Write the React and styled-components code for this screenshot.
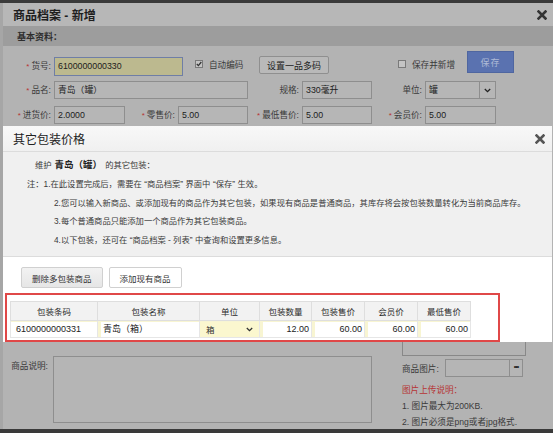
import React from "react";
import styled, { createGlobalStyle } from "styled-components";

const GlobalStyle = createGlobalStyle`
  html, body { margin: 0; padding: 0; }
  body {
    background: #3a3a3a;
    font-family: "Liberation Sans", "Noto Sans CJK SC", sans-serif;
  }
  * { box-sizing: border-box; }
`;

const Page = styled.div`
  position: relative;
  width: 553px;
  height: 433px;
  overflow: hidden;
  display: flex;
  padding-top: 3px;
  background: #3a3a3a;
`;

const LeftStrip = styled.div`
  flex: none;
  width: 3px;
  height: 426px;
  background: #a6a6a6;
`;

const Dialog = styled.div`
  flex: none;
  width: 550px;
  height: 426px;
  background: #b3b3b3;
  display: flex;
  flex-direction: column;
`;

const TitleBar = styled.div`
  height: 23px;
  flex: none;
  background: #b7b7b7;
  display: flex;
  align-items: center;
  justify-content: space-between;
  padding: 0 6px 0 10px;
  font-size: 12px;
  font-weight: bold;
  color: #1e1e1e;
`;

const SectionHeader = styled.div`
  height: 20px;
  flex: none;
  background: #9d9d9d;
  display: flex;
  align-items: center;
  padding-left: 14px;
  font-size: 9px;
  font-weight: bold;
  color: #2e2e2e;
`;

const Form = styled.div`
  padding-top: 5px;
`;

const Row1 = styled.div`
  display: flex;
  align-items: flex-end;
  height: 25px;
`;

const Grid = styled.div`
  display: grid;
  grid-template-columns: 48px 71px 47px 70px 48px 70px 47px 71px;
  column-gap: 3px;
  height: 18px;
  margin-top: ${(p) => p.$top}px;
`;

const Label = styled.div`
  width: ${(p) => (p.$w ? `${p.$w}px` : "auto")};
  height: ${(p) => p.$h || 18}px;
  line-height: ${(p) => p.$h || 18}px;
  text-align: right;
  font-size: 8.6px;
  color: #3a3a3a;
  white-space: nowrap;
`;

const Star = styled.span`
  color: #b83434;
  font-size: 8px;
  margin-right: 2px;
`;

const Input = styled.div`
  height: ${(p) => p.$h || 18}px;
  width: ${(p) => (p.$w ? `${p.$w}px` : "auto")};
  margin-left: ${(p) => p.$ml || 0}px;
  grid-column: ${(p) => (p.$span ? `span ${p.$span}` : "auto")};
  background: ${(p) => (p.$hl ? "#bcb98f" : "#b6b6b6")};
  border: 1px solid ${(p) => (p.$hl ? "#6f7ea6" : "#8e8e8e")};
  font-size: 8.8px;
  line-height: ${(p) => (p.$h || 18) - 2}px;
  padding-left: 3px;
  color: #1c1c1c;
  white-space: nowrap;
`;

const Dropdown = styled.div`
  height: 18px;
  display: flex;
  background: #b6b6b6;
  border: 1px solid #8e8e8e;
  font-size: 8.8px;
  color: #1c1c1c;
`;

const DropText = styled.div`
  flex: 1;
  line-height: 16px;
  padding-left: 3px;
`;

const DropBtn = styled.div`
  width: 16px;
  border-left: 1px solid #8e8e8e;
  display: flex;
  align-items: center;
  justify-content: center;
`;

const CheckLabel = styled.div`
  display: flex;
  align-items: center;
  gap: 6px;
  width: ${(p) => p.$w}px;
  margin-left: ${(p) => p.$ml}px;
  margin-bottom: 6px;
  font-size: 8.6px;
  color: #3a3a3a;
  white-space: nowrap;
`;

const CheckBox = styled.span`
  width: 8px;
  height: 8px;
  border: 1px solid #7a7a7a;
  background: #c4c4c4;
  display: flex;
  align-items: center;
  justify-content: center;
`;

const GrayButton = styled.div`
  width: 70px;
  height: 18px;
  margin-bottom: 2px;
  border: 1px solid #8f8f8f;
  background: #b9b9b9;
  border-radius: 2px;
  font-size: 9px;
  color: #222;
  display: flex;
  align-items: center;
  justify-content: center;
`;

const SaveButton = styled.div`
  width: 47px;
  height: 22px;
  margin-bottom: 3px;
  background: #5a72b0;
  border: 1px solid #4f66a0;
  color: #aebad6;
  font-size: 9px;
  letter-spacing: 1px;
  display: flex;
  align-items: center;
  justify-content: center;
`;

const Lower = styled.div`
  display: flex;
  margin-top: 176px;
`;

const LeftCol = styled.div`
  display: flex;
  padding-top: 56px;
`;

const NoteLabel = styled.div`
  width: 45px;
  padding-top: 4px;
  line-height: 12px;
  text-align: right;
  font-size: 8.6px;
  color: #3a3a3a;
  margin-right: 5px;
`;

const TextArea = styled.div`
  width: 319px;
  height: 67px;
  border: 1px solid #8e8e8e;
  background: #b5b5b5;
`;

const RightCol = styled.div`
  margin-left: 30px;
  width: 124px;
  display: flex;
  flex-direction: column;
`;

const ImageBox = styled.div`
  height: 56px;
  border: 1px solid #888;
`;

const PicRow = styled.div`
  display: flex;
  align-items: center;
  margin-top: 3px;
  height: 18px;
`;

const PicLabel = styled.div`
  width: 43px;
  font-size: 8.6px;
  color: #3a3a3a;
`;

const PicInput = styled.div`
  width: 78px;
  height: 18px;
  display: flex;
  justify-content: flex-end;
  border: 1px solid #8e8e8e;
  background: #b5b5b5;
`;

const DotsBtn = styled.div`
  width: 13px;
  border-left: 1px solid #8e8e8e;
  font-size: 7px;
  line-height: 14px;
  text-align: center;
  color: #222;
  letter-spacing: -1px;
`;

const Notes = styled.div`
  margin-top: 5px;
  font-size: 8.6px;
  line-height: 16px;
  color: #3a3a3a;
  white-space: nowrap;
`;

const RedNote = styled.div`
  color: #b63535;
`;

/* ---------- Modal ---------- */

const Modal = styled.div`
  position: absolute;
  top: 126px;
  left: 3px;
  width: 549px;
  height: 216px;
  background: #fff;
  display: flex;
  flex-direction: column;
`;

const ModalTitle = styled.div`
  height: 26px;
  flex: none;
  display: flex;
  align-items: center;
  justify-content: space-between;
  padding: 0 7px 0 10px;
  background: linear-gradient(#f8f8f8, #f0f0f0);
  border-bottom: 1px solid #dcdcdc;
  font-size: 12px;
  color: #222;
`;

const Info = styled.div`
  height: 105px;
  flex: none;
  background: #f0f0f0;
  border-bottom: 1px solid #dcdcdc;
  padding: 4px 0 0;
  font-size: 8.3px;
  line-height: 18.75px;
  color: #3a3a3a;
  white-space: nowrap;
`;

const InfoLine = styled.div`
  padding-left: ${(p) => p.$indent}px;
`;

const Quote = styled.span`
  margin: 0 2.5px;
`;

const Strong = styled.b`
  font-size: 9.5px;
  color: #222;
  margin: 0 3px;
`;

const Actions = styled.div`
  display: flex;
  gap: 6px;
  padding: 10px 0 0 18px;
`;

const ActionButton = styled.div`
  height: 21px;
  padding: 0 10px;
  border: 1px solid #d0d0d0;
  border-radius: 2px;
  background: ${(p) => (p.$gray ? "linear-gradient(#f2f2f2, #e6e6e6)" : "#fff")};
  font-size: 8.5px;
  color: #333;
  display: flex;
  align-items: center;
`;

const RedBox = styled.div`
  margin: 5px 0 0 2px;
  width: 495px;
  height: 49px;
  border: 2px solid #e04848;
  padding: 6px 0 0 3px;
`;

const Table = styled.table`
  border-collapse: collapse;
  table-layout: fixed;
  width: 460px;
`;

const Th = styled.th`
  height: 19px;
  padding: 0;
  background: #f2f2f2;
  border: 1px solid #dedede;
  font-size: 8.5px;
  font-weight: normal;
  color: #2a2a2a;
  text-align: center;
`;

const Td = styled.td`
  height: 17px;
  padding: 0;
  border: 1px solid #e6e6e6;
  background: #f8f5d2;
`;

const CellInput = styled.div`
  height: 15px;
  margin-left: ${(p) => (p.$first ? 0 : 3)}px;
  background: #fff;
  font-size: 9px;
  line-height: 15px;
  color: #222;
  text-align: ${(p) => (p.$right ? "right" : "left")};
  padding: ${(p) => (p.$right ? "0 2px 0 0" : p.$first ? "0 0 0 5px" : "0 0 0 2px")};
  white-space: nowrap;
`;

const CellSelect = styled.div`
  height: 15px;
  display: flex;
  align-items: center;
  justify-content: space-between;
  padding: 0 6px 0 6px;
  background: #fbf7cf;
  font-size: 8.5px;
  color: #333;
`;

const XIcon = ({ color = "#444" }) => (
  <svg width="10" height="10" viewBox="0 0 10 10">
    <path d="M1.5 1.5 L8.5 8.5 M8.5 1.5 L1.5 8.5" stroke={color} strokeWidth="2.6" strokeLinecap="square" />
  </svg>
);

const Chevron = ({ color = "#333" }) => (
  <svg width="7" height="5" viewBox="0 0 7 5">
    <path d="M0.8 1 L3.5 3.7 L6.2 1" stroke={color} strokeWidth="1.3" fill="none" />
  </svg>
);

const Check = () => (
  <svg width="6" height="6" viewBox="0 0 6 6">
    <path d="M0.8 3 L2.4 4.6 L5.3 1" stroke="#333" strokeWidth="1.3" fill="none" />
  </svg>
);

const columns = ["包装条码", "包装名称", "单位", "包装数量", "包装售价", "会员价", "最低售价"];
const widths = [87, 102, 60, 52, 53, 53, 53];

export default function App() {
  return (
    <>
      <GlobalStyle />
      <Page>
        <LeftStrip />
        <Dialog>
          <TitleBar>
            <span>商品档案 - 新增</span>
            <XIcon color="#333" />
          </TitleBar>
          <SectionHeader>基本资料：</SectionHeader>
          <Form>
            <Row1>
              <Label $w={48} $h={19}>
                <Star>*</Star>货号:
              </Label>
              <Input $hl $w={129} $h={19} $ml={3}>6100000000330</Input>
              <CheckLabel $w={64} $ml={12}>
                <CheckBox><Check /></CheckBox>自动编码
              </CheckLabel>
              <GrayButton>设置一品多码</GrayButton>
              <CheckLabel $w={69} $ml={69}>
                <CheckBox />保存并新增
              </CheckLabel>
              <SaveButton>保存</SaveButton>
            </Row1>
            <Grid $top={5}>
              <Label><Star>*</Star>品名:</Label>
              <Input $span={3}>青岛（罐）</Input>
              <Label>规格:</Label>
              <Input>330毫升</Input>
              <Label>单位:</Label>
              <Dropdown>
                <DropText>罐</DropText>
                <DropBtn><Chevron color="#222" /></DropBtn>
              </Dropdown>
            </Grid>
            <Grid $top={7}>
              <Label><Star>*</Star>进货价:</Label>
              <Input>2.0000</Input>
              <Label><Star>*</Star>零售价:</Label>
              <Input>5.00</Input>
              <Label><Star>*</Star>最低售价:</Label>
              <Input>5.00</Input>
              <Label><Star>*</Star>会员价:</Label>
              <Input>5.00</Input>
            </Grid>
          </Form>
          <Lower>
            <LeftCol>
              <NoteLabel>商品说明:</NoteLabel>
              <TextArea />
            </LeftCol>
            <RightCol>
              <ImageBox />
              <PicRow>
                <PicLabel>商品图片:</PicLabel>
                <PicInput>
                  <DotsBtn>•••</DotsBtn>
                </PicInput>
              </PicRow>
              <Notes>
                <RedNote>图片上传说明：</RedNote>
                <div>1. 图片最大为200KB.</div>
                <div>2. 图片必须是png或者jpg格式.</div>
              </Notes>
            </RightCol>
          </Lower>
        </Dialog>

        <Modal>
          <ModalTitle>
            <span>其它包装价格</span>
            <XIcon color="#555" />
          </ModalTitle>
          <Info>
            <InfoLine $indent={32}>
              维护<Strong>青岛（罐）</Strong>的其它包装：
            </InfoLine>
            <InfoLine $indent={24}>
              注：1.在此设置完成后，需要在<Quote>“商品档案”</Quote>界面中<Quote>“保存”</Quote>生效。
            </InfoLine>
            <InfoLine $indent={51}>
              2.您可以输入新商品、或添加现有的商品作为其它包装，如果现有商品是普通商品，其库存将会按包装数量转化为当前商品库存。
            </InfoLine>
            <InfoLine $indent={51}>3.每个普通商品只能添加一个商品作为其它包装商品。</InfoLine>
            <InfoLine $indent={51}>
              4.以下包装，还可在<Quote>“商品档案 - 列表”</Quote>中查询和设置更多信息。
            </InfoLine>
          </Info>
          <Actions>
            <ActionButton $gray>删除多包装商品</ActionButton>
            <ActionButton>添加现有商品</ActionButton>
          </Actions>
          <RedBox>
            <Table>
              <colgroup>
                {widths.map((w, i) => (
                  <col key={i} style={{ width: w }} />
                ))}
              </colgroup>
              <thead>
                <tr>
                  {columns.map((c) => (
                    <Th key={c}>{c}</Th>
                  ))}
                </tr>
              </thead>
              <tbody>
                <tr>
                  <Td><CellInput $first>6100000000331</CellInput></Td>
                  <Td><CellInput>青岛（箱）</CellInput></Td>
                  <Td>
                    <CellSelect>
                      <span>箱</span>
                      <Chevron />
                    </CellSelect>
                  </Td>
                  <Td><CellInput $right>12.00</CellInput></Td>
                  <Td><CellInput $right>60.00</CellInput></Td>
                  <Td><CellInput $right>60.00</CellInput></Td>
                  <Td><CellInput $right>60.00</CellInput></Td>
                </tr>
              </tbody>
            </Table>
          </RedBox>
        </Modal>
      </Page>
    </>
  );
}
